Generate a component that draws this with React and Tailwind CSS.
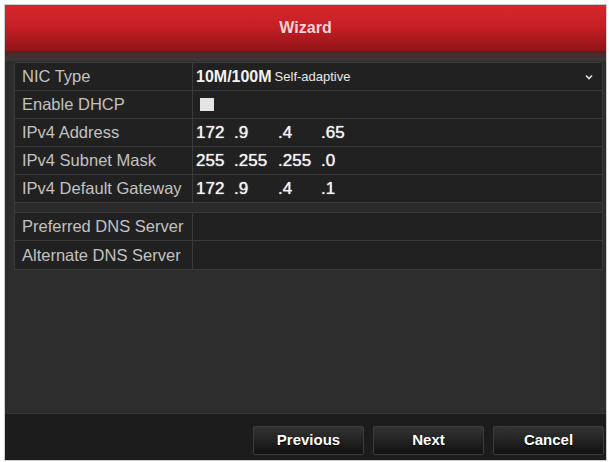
const rows = [
    { label: "IPv4 Address", ip: ["172", ".9", ".4", ".65"] },
    { label: "IPv4 Subnet Mask", ip: ["255", ".255", ".255", ".0"] },
    { label: "IPv4 Default Gateway", ip: ["172", ".9", ".4", ".1"] },
];

const Row = ({ label, children, last }) => (
    <div className={`flex h-[28px] bg-[#212121] ${last ? "" : "border-b border-[#3b3b3b]"}`}>
        <div className="w-[178px] shrink-0 border-r border-[#3b3b3b] pl-[7px] flex items-center text-[16.5px] text-[#c2c2c2] whitespace-nowrap">
            {label}
        </div>
        <div className="flex-1 flex items-center pl-[3px] text-white">{children}</div>
    </div>
);

const IpValue = ({ ip }) => (
    <div className="flex items-center text-[17px] text-[#f2f2f2] [text-shadow:0_0_1px_#fff]">
        <span className="w-[38px]">{ip[0]}</span>
        <span className="w-[44px]">{ip[1]}</span>
        <span className="w-[43px]">{ip[2]}</span>
        <span>{ip[3]}</span>
    </div>
);

const WizButton = ({ children }) => (
    <button className="w-[111px] h-[29px] rounded-[2px] border border-[#3c3c3c] bg-gradient-to-b from-[#333333] to-[#121212] text-white font-bold text-[15px] [text-shadow:0_1px_1px_#000]">
        {children}
    </button>
);

export default function App() {
    return (
        <div className="w-[609px] h-[462px] bg-white pt-[4px] pl-[4px] pr-[2px] pb-[1px] font-['Liberation_Sans',Arial,sans-serif]">
            <div className="h-full flex flex-col border border-[#cdcdcd] bg-[#2d2d2d]">
                <div className="h-[46px] shrink-0 flex items-center justify-center bg-gradient-to-b from-[#d8262d] via-[#c41e24] to-[#901417] text-[16px] font-bold text-[#f5d3d3]">
                    Wizard
                </div>
                <div className="h-[10px] shrink-0 bg-gradient-to-b from-[#4d2323] to-[#383838]" />

                <div className="flex-1 pl-[9px] pr-[3px] pt-[1px]">
                    <div className="border border-[#3b3b3b]">
                        <Row label="NIC Type">
                            <div className="flex-1 flex items-center pr-[9px]">
                                <span className="text-[16px] font-bold text-[#f2f2f2]">10M/100M</span>
                                <span className="ml-[3px] text-[13px] text-[#e8e8e8]">Self-adaptive</span>
                                <svg className="ml-auto" width="8" height="6" viewBox="0 0 8 6">
                                    <polyline points="1,1.5 4,4.5 7,1.5" fill="none" stroke="#e0e0e0" strokeWidth="1.6" />
                                </svg>
                            </div>
                        </Row>
                        <Row label="Enable DHCP">
                            <div className="ml-[4px] w-[14px] h-[13px] bg-[#e4e4e4]" />
                        </Row>
                        {rows.map((r) => (
                            <Row key={r.label} label={r.label}>
                                <IpValue ip={r.ip} />
                            </Row>
                        ))}
                        <div className="h-[10px] bg-[#2b2b2b] border-b border-[#3b3b3b]" />
                        <Row label="Preferred DNS Server" />
                        <Row label="Alternate DNS Server" last />
                    </div>
                </div>

                <div className="h-[47px] shrink-0 bg-[#1c1c1c] border-t border-[#363636] flex justify-end items-start gap-[9px] pt-[12px] pr-[2px]">
                    <WizButton>Previous</WizButton>
                    <WizButton>Next</WizButton>
                    <WizButton>Cancel</WizButton>
                </div>
            </div>
        </div>
    );
}
